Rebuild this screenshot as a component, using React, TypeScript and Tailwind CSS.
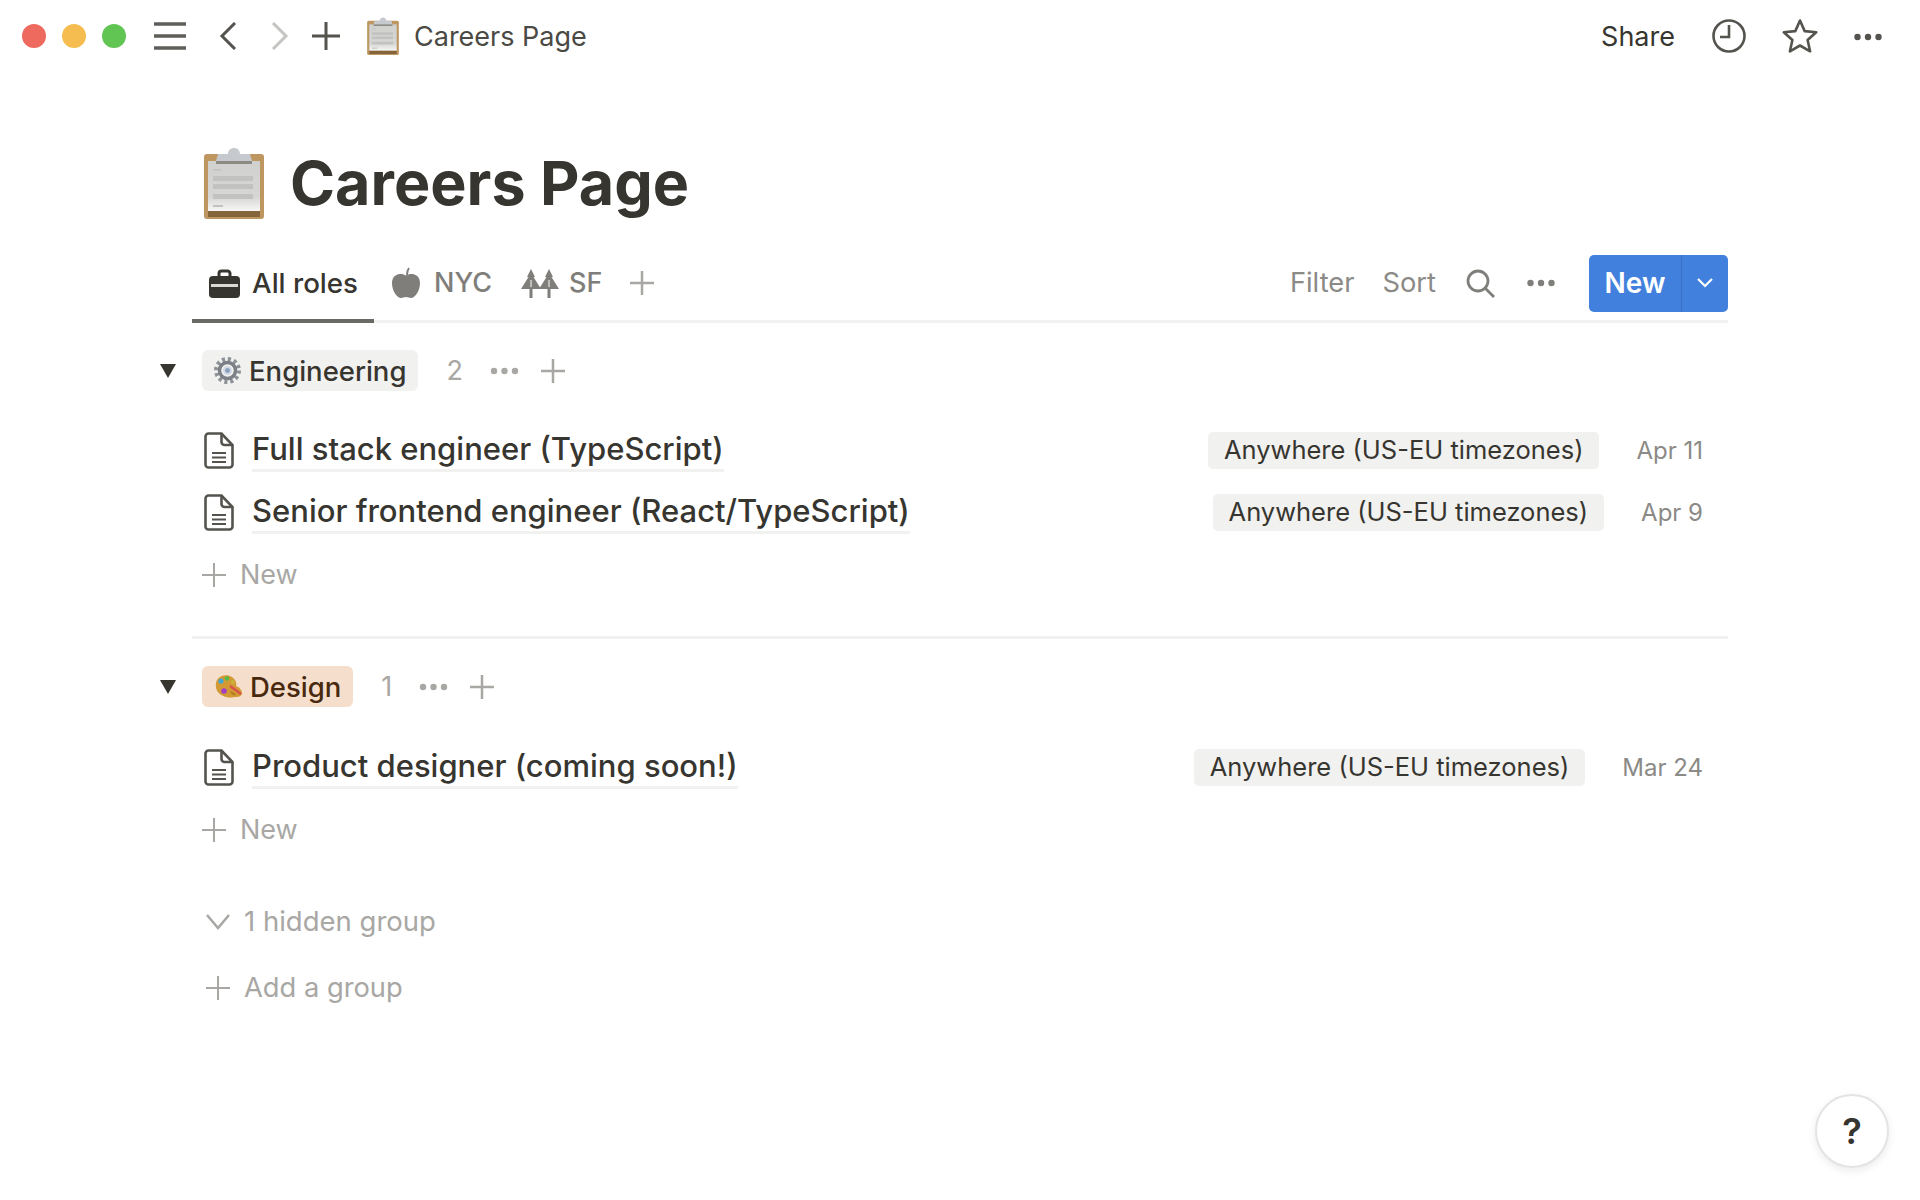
import { ReactNode } from "react";

const INK = "#37352f";
const SOFT = "#7f7e7a";
const FAINT = "#a8a7a4";

function Plus({ size, color, width = 2.5 }: { size: number; color: string; width?: number }) {
    return (
        <svg width={size} height={size} viewBox="0 0 24 24" className="shrink-0">
            <path d="M12 0v24M0 12h24" stroke={color} strokeWidth={(width * 24) / size} fill="none" />
        </svg>
    );
}

function Dots({ width, color }: { width: number; color: string }) {
    return (
        <svg width={width} height="8" viewBox="0 0 28 8" className="shrink-0">
            <circle cx="3.5" cy="4" r="3.2" fill={color} />
            <circle cx="14" cy="4" r="3.2" fill={color} />
            <circle cx="24.5" cy="4" r="3.2" fill={color} />
        </svg>
    );
}

function Triangle() {
    return (
        <svg width="16" height="14" viewBox="0 0 16 14" className="shrink-0">
            <path d="M0 0h16L8 14z" fill={INK} />
        </svg>
    );
}

function PageIcon() {
    return (
        <svg width="30" height="37" viewBox="0 0 30 37" fill="none" stroke="#55534e" strokeWidth="2.6" className="shrink-0">
            <path d="M4.500 1.500h13L28.500 13v19.500a3 3 0 0 1-3 3h-21a3 3 0 0 1-3-3v-28a3 3 0 0 1 3-3z" />
            <path d="M17.500 1.500V10a3 3 0 0 0 3 3h8" />
            <path d="M8 21h14M8 25.500h14M8 30h14" strokeWidth="1.800" />
        </svg>
    );
}

function Clipboard({ width, height, id }: { width: number; height: number; id: string }) {
    return (
        <svg width={width} height={height} viewBox="0 0 60 72" className="shrink-0">
            <defs>
                <linearGradient id={id} x1="0" y1="0" x2="0" y2="1">
                    <stop offset="0" stopColor="#d0d0ce" />
                    <stop offset="0.72" stopColor="#d6d6d4" />
                    <stop offset="1" stopColor="#f7f7f6" />
                </linearGradient>
            </defs>
            <rect x="0" y="7" width="60" height="65" rx="3" fill="#bd9660" />
            <rect x="4" y="14" width="52" height="50" fill={`url(#${id})`} />
            <rect x="4" y="64" width="52" height="6" fill="#85643a" />
            <path d="M24 7c0-8 12-8 12 0h10l2 7v3H12v-3l2-7z" fill="#c6cacf" />
            <rect x="12" y="14" width="36" height="3" fill="#8d8983" />
            <g fill="#c2c2c0">
                <rect x="9" y="22" width="8" height="1.500" />
                <rect x="9" y="29" width="40" height="5" />
                <rect x="9" y="37" width="40" height="5" />
                <rect x="9" y="47" width="40" height="5" />
                <rect x="9" y="58" width="10" height="2" />
            </g>
        </svg>
    );
}

function Briefcase() {
    return (
        <svg width="31" height="29" viewBox="0 0 31 29" className="shrink-0">
            <path d="M10 8V4.500A2.500 2.500 0 0 1 12.500 2h6A2.500 2.500 0 0 1 21 4.500V8" fill="none" stroke={INK} strokeWidth="3" />
            <rect x="0" y="7" width="31" height="22" rx="4" fill={INK} />
            <rect x="2" y="15" width="27" height="3" fill="#d9d9d6" />
        </svg>
    );
}

function Apple() {
    return (
        <svg width="28" height="32" viewBox="0 0 28 32" className="shrink-0">
            <path d="M15 8c0-3 .5-5 2-7" fill="none" stroke={SOFT} strokeWidth="2" />
            <path d="M14 8.500C18 5.500 28 6 28 16c0 8-5 15-9 15-2 0-3-1-5-1s-3 1-5 1c-4 0-9-7-9-15C0 6 10 5.500 14 8.500z" fill={SOFT} />
        </svg>
    );
}

function Trees() {
    return (
        <svg width="38" height="29" viewBox="0 0 38 29" className="shrink-0" fill={SOFT}>
            <path d="M10 0l4 8h-1.500l7.500 12H0L7.500 8H6z" />
            <path d="M28 0l4 8h-1.500l7.500 12H18L25.500 8H24z" />
            <rect x="8.500" y="8" width="3" height="21" />
            <rect x="26.500" y="8" width="3" height="21" />
            <path d="M10 11v7M28 11v7" stroke="#fff" strokeWidth="1" />
        </svg>
    );
}

function Gear() {
    return (
        <svg width="27" height="27" viewBox="0 0 27 27" className="shrink-0" fill="none">
            <circle cx="13.500" cy="13.500" r="11" stroke="#8d9299" strokeWidth="5" strokeDasharray="3 2.760" />
            <circle cx="13.500" cy="13.500" r="8" stroke="#7d8086" strokeWidth="3.500" />
            <circle cx="13.500" cy="13.500" r="4.500" fill="#d3dbe6" />
            <circle cx="13.500" cy="13.500" r="2.500" fill="#8fa3c0" />
        </svg>
    );
}

function Palette() {
    return (
        <svg width="28" height="25" viewBox="0 0 28 25" className="shrink-0">
            <path d="M2 9C3 2 12-1 18 3c4 3 5 6 4 9 3 1 6 4 6 7 0 3-3 4-6 4-9 2-22-2-20-14z" fill="#d39a34" />
            <circle cx="7" cy="7" r="2.600" fill="#3fa7d6" />
            <circle cx="13" cy="4.500" r="2.300" fill="#57b947" />
            <circle cx="19" cy="8" r="2" fill="#c9b13a" />
            <circle cx="10" cy="17" r="2.800" fill="#a23fc4" />
            <path d="M16 12l11 8" stroke="#d9534f" strokeWidth="2.500" />
            <path d="M17 18l4 3" stroke="#b07a20" strokeWidth="2" />
        </svg>
    );
}

function Tag({ children }: { children: ReactNode }) {
    return (
        <span className="flex items-center h-[37px] px-4 rounded-[5px] bg-[#f1f1ef] text-[25.5px] text-[#37352f] whitespace-nowrap">
            {children}
        </span>
    );
}

function Row({ title, date }: { title: string; date: string }) {
    return (
        <div className="flex items-center h-[62px] pl-3 pr-[25px]">
            <PageIcon />
            <div className="flex-1 ml-[18px]">
                <span className="inline-block text-[31px] leading-[40px] font-medium text-[#37352f] border-b-[3px] border-[#f1f1ef] whitespace-nowrap">
                    {title}
                </span>
            </div>
            <Tag>Anywhere (US-EU timezones)</Tag>
            <span className="ml-[37px] pt-[2px] text-[24px] text-[#8b8a86] whitespace-nowrap">{date}</span>
        </div>
    );
}

function NewRow() {
    return (
        <div className="flex items-center h-[62px] pl-[10px] pt-[2px]">
            <Plus size={24} color={FAINT} width={2} />
            <span className="ml-[14px] text-[27px] text-[#a8a7a4]">New</span>
        </div>
    );
}

function GroupHeader({
    icon,
    label,
    count,
    bg,
    text,
}: {
    icon: ReactNode;
    label: string;
    count: number;
    bg: string;
    text: string;
}) {
    return (
        <div className="flex items-center h-[41px] -ml-8">
            <Triangle />
            <div className={`ml-[26px] flex items-center h-full pl-3 pr-3 rounded-[6px] ${bg}`}>
                {icon}
                <span className={`ml-[8px] pt-[2px] text-[27.5px] font-medium ${text}`}>{label}</span>
            </div>
            <span className="ml-7 pt-[2px] text-[27px] text-[#a8a7a4]">{count}</span>
            <span className="ml-[27px]">
                <Dots width={29} color={FAINT} />
            </span>
            <span className="ml-[22px]">
                <Plus size={24} color={FAINT} width={2.5} />
            </span>
        </div>
    );
}

export default function App() {
    return (
        <div className="relative w-[1920px] h-[1200px] bg-white overflow-hidden font-['Inter',sans-serif] text-[#37352f]">
            {/* window bar */}
            <header className="flex items-center h-[72px] pl-[22px] pr-[34px]">
                <span className="w-6 h-6 rounded-full bg-[#ee6a5f]" />
                <span className="w-6 h-6 rounded-full bg-[#f5bd4f] ml-4" />
                <span className="w-6 h-6 rounded-full bg-[#61c554] ml-4" />
                <svg width="32" height="28" viewBox="0 0 32 28" className="ml-7" stroke="#5f5e5a" strokeWidth="3.500">
                    <path d="M0 2h32M0 14h32M0 26h32" />
                </svg>
                <svg width="18" height="28" viewBox="0 0 18 28" className="ml-[33px]" fill="none" stroke="#55534e" strokeWidth="3">
                    <path d="M16 1L3 14l13 13" />
                </svg>
                <svg width="18" height="28" viewBox="0 0 18 28" className="ml-[34px]" fill="none" stroke="#c4c4c2" strokeWidth="3">
                    <path d="M2 1l13 13L2 27" />
                </svg>
                <span className="ml-[23px]">
                    <Plus size={28} color="#55534e" width={3} />
                </span>
                <span className="ml-[27px]">
                    <Clipboard id="sheet-small" width={32} height={38} />
                </span>
                <span className="ml-[15px] pt-[2px] text-[27px] text-[#4a4944]">Careers Page</span>
                <span className="ml-auto pt-[2px] text-[27px] text-[#37352f]">Share</span>
                <svg width="34" height="34" viewBox="0 0 34 34" className="ml-[37px]" fill="none" stroke="#55534e" strokeWidth="2.600">
                    <circle cx="17" cy="17" r="15.500" />
                    <path d="M17 6v12H8" />
                </svg>
                <svg width="36" height="36" viewBox="0 0 36 36" className="ml-9" fill="none" stroke="#55534e" strokeWidth="2.600" strokeLinejoin="round">
                    <path d="M18 2.500l4.700 10.600 11.500 1.200-8.600 7.700 2.500 11.300L18 27.500l-10.100 5.800 2.500-11.300-8.600-7.700 11.500-1.200z" />
                </svg>
                <span className="ml-8 pt-[2px]">
                    <Dots width={36} color="#55534e" />
                </span>
            </header>

            <main className="ml-[192px] w-[1536px]">
                {/* title */}
                <div className="flex items-center h-[80px] mt-[71px] pl-3">
                    <Clipboard id="sheet-large" width={60} height={72} />
                    <h1 className="ml-[26px] text-[61px] font-bold leading-none text-[#37352f] whitespace-nowrap">
                        Careers Page
                    </h1>
                </div>

                {/* views */}
                <div className="flex items-start h-[69px] mt-[31px] border-b-[3px] border-[#f1f1ef]">
                    <div className="flex items-center h-[69px] w-[182px] pl-[17px] pb-[6px] border-b-[4px] border-[#6a6964]">
                        <Briefcase />
                        <span className="ml-3 text-[27.7px] font-medium text-[#37352f]">All roles</span>
                    </div>
                    <div className="flex items-center h-[58px] ml-[18px]">
                        <Apple />
                        <span className="ml-[14px] text-[27px] font-medium text-[#7f7e7a]">NYC</span>
                    </div>
                    <div className="flex items-center h-[58px] ml-[29px]">
                        <Trees />
                        <span className="ml-[10px] text-[27px] font-medium text-[#7f7e7a]">SF</span>
                    </div>
                    <div className="flex items-center h-[58px] ml-7">
                        <Plus size={24} color={FAINT} width={2.5} />
                    </div>
                    <div className="flex items-center h-[58px] ml-auto text-[27.3px] text-[#8b8a86]">
                        <span>Filter</span>
                        <span className="ml-7">Sort</span>
                        <svg width="29" height="29" viewBox="0 0 29 29" className="ml-[30px]" fill="none" stroke="#7f7e7a" strokeWidth="2.800">
                            <circle cx="12" cy="12" r="10" />
                            <path d="M19 19l9 9" />
                        </svg>
                        <span className="ml-8">
                            <Dots width={28} color={SOFT} />
                        </span>
                        <div className="flex ml-[34px] h-[57px] w-[139px] rounded-[5px] bg-[#4180dc] text-white">
                            <span className="flex items-center justify-center w-[92px] text-[28px] font-semibold">New</span>
                            <span className="flex items-center justify-center flex-1 border-l border-[#3a6fbd]">
                                <svg width="18" height="12" viewBox="0 0 18 12" fill="none" stroke="#fff" strokeWidth="2.200">
                                    <path d="M2 2l7 7 7-7" />
                                </svg>
                            </span>
                        </div>
                    </div>
                </div>

                {/* engineering */}
                <section className="mt-[27px]">
                    <GroupHeader
                        icon={<Gear />}
                        label="Engineering"
                        count={2}
                        bg="bg-[#f1f1ef]"
                        text="text-[#37352f]"
                    />
                    <div className="mt-[28px]">
                        <Row title="Full stack engineer (TypeScript)" date="Apr 11" />
                        <Row title="Senior frontend engineer (React/TypeScript)" date="Apr 9" />
                        <NewRow />
                    </div>
                </section>

                <div className="h-[3px] mt-[31px] bg-[#f1f1ef]" />

                {/* design */}
                <section className="mt-[27px]">
                    <GroupHeader
                        icon={<Palette />}
                        label="Design"
                        count={1}
                        bg="bg-[#f5dfcc]"
                        text="text-[#49290e]"
                    />
                    <div className="mt-[29px]">
                        <Row title="Product designer (coming soon!)" date="Mar 24" />
                        <NewRow />
                    </div>
                </section>

                {/* hidden groups */}
                <div className="flex items-center h-[40px] mt-[42px] pl-[14px]">
                    <svg width="24" height="16" viewBox="0 0 24 16" fill="none" stroke={FAINT} strokeWidth="2.500" className="shrink-0">
                        <path d="M1 1l11 13L23 1" />
                    </svg>
                    <span className="ml-[14px] text-[27.5px] text-[#a8a7a4]">1 hidden group</span>
                </div>
                <div className="flex items-center h-[40px] mt-[26px] pl-[14px]">
                    <Plus size={24} color={FAINT} width={2} />
                    <span className="ml-[14px] text-[27.3px] text-[#a8a7a4]">Add a group</span>
                </div>
            </main>

            {/* help bubble */}
            <div className="absolute left-[1815px] top-[1094px] flex items-center justify-center w-[74px] h-[74px] rounded-full bg-white border-2 border-[#e4e4e2] shadow-[0_3px_8px_rgba(15,15,15,0.08)] text-[36px] font-semibold text-[#37352f]">
                ?
            </div>
        </div>
    );
}
